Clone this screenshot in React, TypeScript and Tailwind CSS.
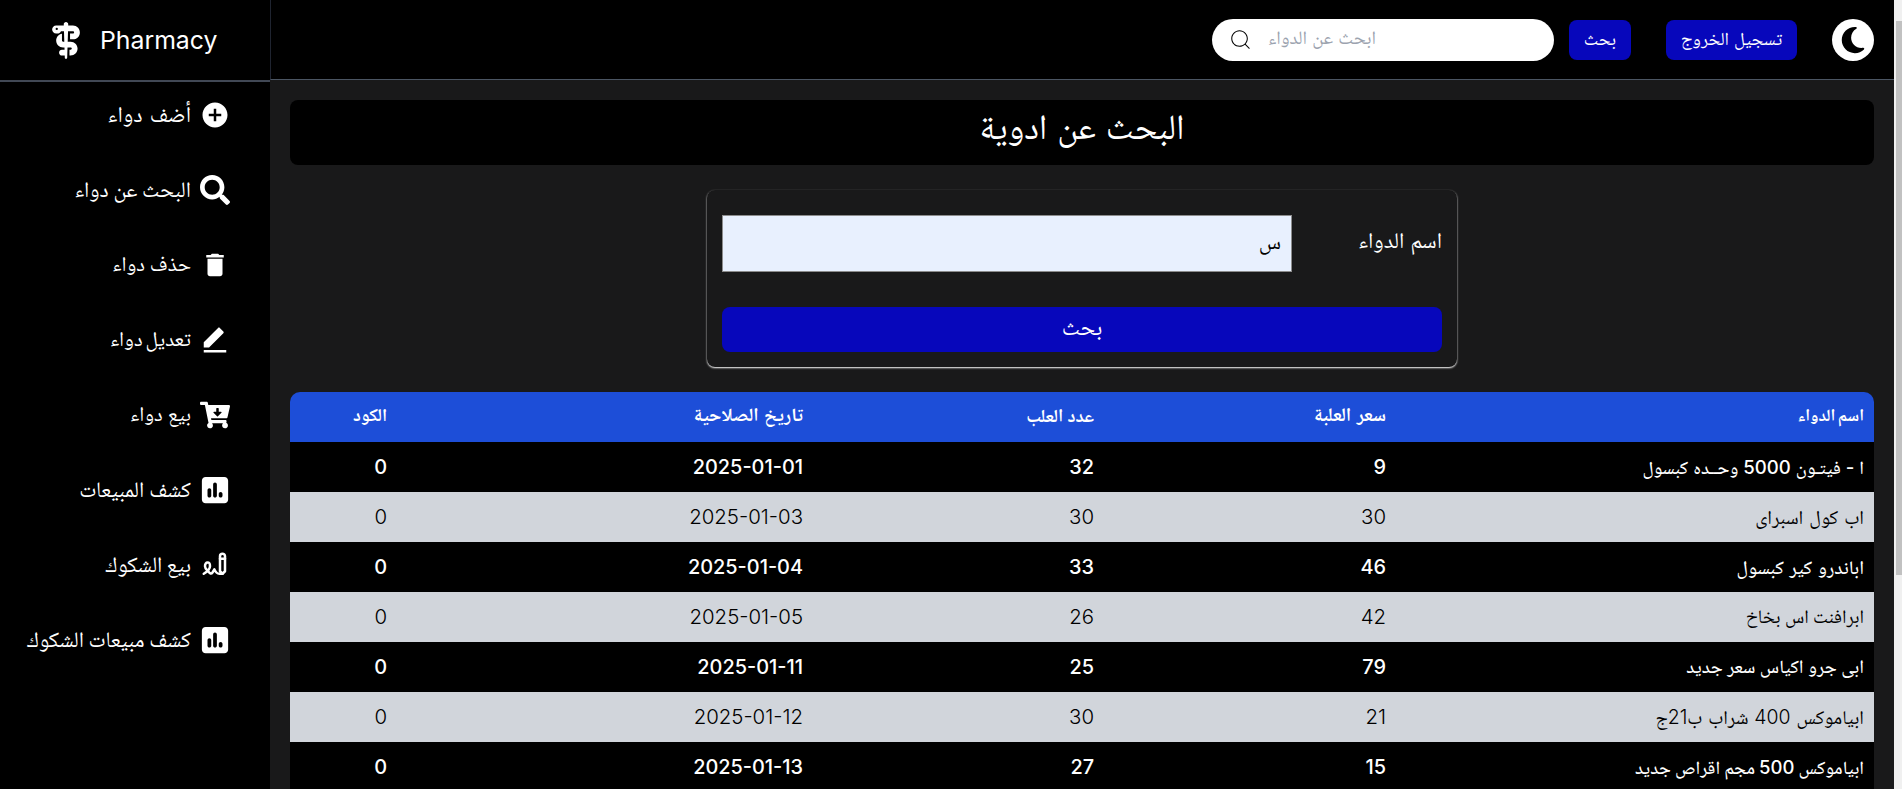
import type { ReactNode } from "react";
import { FaMoon, FaSquarePollVertical, FaStaffSnake } from "react-icons/fa6";
import { FaCartArrowDown, FaSearch } from "react-icons/fa";
import { MdAddCircle, MdDelete } from "react-icons/md";
import { RiEditFill } from "react-icons/ri";
import { TbWritingSign } from "react-icons/tb";
import { CiSearch } from "react-icons/ci";

type NavItem = { label: string; icon: ReactNode; type: string };

const navItems: NavItem[] = [
  { label: "أضف دواء", icon: <MdAddCircle />, type: "text-[22.4px] [word-spacing:1px]" },
  { label: "البحث عن دواء", icon: <FaSearch />, type: "text-[22px] [word-spacing:-1.5px]" },
  { label: "حذف دواء", icon: <MdDelete />, type: "text-[21px] [word-spacing:-1px]" },
  { label: "تعديل دواء", icon: <RiEditFill />, type: "text-[21px] [word-spacing:-3px]" },
  { label: "بيع دواء", icon: <FaCartArrowDown />, type: "text-[21px] [word-spacing:-1px]" },
  { label: "كشف المبيعات", icon: <FaSquarePollVertical />, type: "text-[22px] [word-spacing:-1px]" },
  { label: "بيع الشكوك", icon: <TbWritingSign />, type: "text-[22px] [word-spacing:-2px]" },
  { label: "كشف مبيعات الشكوك", icon: <FaSquarePollVertical />, type: "text-[22px] [word-spacing:-1.5px]" },
];

const columns = [
  { label: "اسم الدواء", type: "text-[17px] [word-spacing:-1.5px]" },
  { label: "سعر العلبة", type: "text-[19px] [word-spacing:1px]" },
  { label: "عدد العلب", type: "text-[18.4px] [word-spacing:0px]" },
  { label: "تاريخ الصلاحية", type: "text-[18.8px] [word-spacing:1px]" },
  { label: "الكود", type: "text-[18px] [word-spacing:0px]" },
];

const medicines = [
  { name: "ا - فيتـون 5000 وحــده كبسول", price: 9, boxes: 32, expiry: "2025-01-01", code: 0, type: "text-[18.6px] [word-spacing:0px]" },
  { name: "اب كول اسبراى", price: 30, boxes: 30, expiry: "2025-01-03", code: 0, type: "text-[19.6px] [word-spacing:0.5px]" },
  { name: "اباندرو كير كبسول", price: 46, boxes: 33, expiry: "2025-01-04", code: 0, type: "text-[19.2px] [word-spacing:0.5px]" },
  { name: "ابرافنت اس بخاخ", price: 42, boxes: 26, expiry: "2025-01-05", code: 0, type: "text-[19px] [word-spacing:-1px]" },
  { name: "ابى جرو اكياس سعر جديد", price: 79, boxes: 25, expiry: "2025-01-11", code: 0, type: "text-[18.8px] [word-spacing:-0.5px]" },
  { name: "ابياموكس 400 شراب ب21ج", price: 21, boxes: 30, expiry: "2025-01-12", code: 0, type: "text-[19.4px] [word-spacing:0.5px]" },
  { name: "ابياموكس 500 مجم اقراص جديد", price: 15, boxes: 27, expiry: "2025-01-13", code: 0, type: "text-[18.5px] [word-spacing:-0.8px]" },
];

const rowGrid = "grid grid-cols-[478px_292px_291px_416px_107px] items-center";

function Sidebar() {
  return (
    <aside dir="ltr" className="flex w-[270px] shrink-0 flex-col bg-black text-white">
      <div className="flex h-[82px] items-center border-b-2 border-[#414855] pl-[52px]">
        <FaStaffSnake className="h-[37px] w-[28px]" />
        <span className="ml-[20px] text-[24.8px] leading-8">Pharmacy</span>
      </div>
      <nav className="-mt-[5px] flex flex-col">
        {navItems.map((item) => (
          <a key={item.label} dir="rtl" className="flex h-[75px] items-center gap-[9px] pr-10">
            <span className="text-[30px]">{item.icon}</span>
            <span className={`-mt-px leading-[30px] whitespace-nowrap ${item.type}`}>{item.label}</span>
          </a>
        ))}
      </nav>
    </aside>
  );
}

function Header() {
  return (
    <header className="flex h-20 shrink-0 items-center border-b border-l border-b-[#4b5563] border-l-[#1f2430] bg-black pr-5 text-white">
      <button className="flex size-[42px] items-center justify-center rounded-full bg-white text-black">
        <FaMoon className="text-[30px]" />
      </button>
      <button className="mr-[35px] flex h-10 w-[131px] items-center justify-center rounded-lg bg-[#0707bb] pb-[3px] text-[18.4px] leading-6">
        تسجيل الخروج
      </button>
      <button className="mr-[35px] flex h-10 w-[62px] items-center justify-center rounded-lg bg-[#0707bb] pb-[3px] text-[18.4px] leading-6">
        بحث
      </button>
      <div dir="ltr" className="mr-[15px] flex h-[42px] w-[342px] items-center rounded-full bg-white pl-[16px]">
        <CiSearch className="text-[25px] text-black" />
        <span className="ml-[15px] pb-[3px] text-[18.9px] leading-6 whitespace-nowrap text-[#9ca3af]">ابحث عن الدواء</span>
      </div>
    </header>
  );
}

function SearchForm() {
  return (
    <form className="mx-auto mt-[25px] h-[177px] w-[750px] rounded-lg bg-[#19191a] px-[15px] pt-[25px] shadow-[0_1px_2px_#fff]">
      <div className="flex h-[57px] items-center justify-between">
        <label className="pb-[7px] text-[22.2px] leading-[30px] text-white">اسم الدواء</label>
        <div className="flex h-[57px] w-[570px] items-center border border-[#8c8c8c] bg-[#e8f0fe] px-[10px] pb-[5px] text-[22px] leading-[30px] text-black">
          س
        </div>
      </div>
      <button
        type="button"
        className="mt-[35px] flex h-[45px] w-full items-center justify-center rounded-lg bg-[#0707bb] pb-[5px] text-[23px] leading-[30px] text-white"
      >
        بحث
      </button>
    </form>
  );
}

function MedicineTable() {
  return (
    <div className="mt-[25px] overflow-hidden rounded-t-[10px]">
      <div className={`${rowGrid} h-[50px] bg-[#1d4ed8] pb-1 leading-6 font-bold text-white`}>
        {columns.map((c) => (
          <span key={c.label} className={`pr-[10px] whitespace-nowrap ${c.type}`}>
            {c.label}
          </span>
        ))}
      </div>
      {medicines.map((m, i) => (
        <div
          key={m.name}
          className={`${rowGrid} h-[50px] leading-7 ${
            i % 2 === 0
              ? "bg-black text-[19.9px] font-medium text-white"
              : "bg-[#d1d5db] text-[20.4px] font-light text-black"
          }`}
        >
          <span className={`pr-[10px] pb-px whitespace-nowrap ${m.type}`}>{m.name}</span>
          <span className="pr-[10px]">{m.price}</span>
          <span className="pr-[10px]">{m.boxes}</span>
          <span dir="ltr" className="pr-[10px] text-right">
            {m.expiry}
          </span>
          <span className="pr-[10px]">{m.code}</span>
        </div>
      ))}
    </div>
  );
}

export default function App() {
  return (
    <div className="h-[796px] w-[1902px] overflow-hidden bg-white font-[Inter,'Noto_Naskh_Arabic','DejaVu_Sans',sans-serif]">
      <div className="flex h-[789px] overflow-hidden">
        <Sidebar />
        <div dir="rtl" className="flex w-[1624px] shrink-0 flex-col bg-[#19191a]">
          <Header />
          <main className="h-[709px] overflow-hidden px-5 pt-5">
            <h1 className="flex h-[65px] items-center justify-center rounded-lg bg-black pb-3 text-[35.4px] leading-10 text-white">
              البحث عن ادوية
            </h1>
            <SearchForm />
            <MedicineTable />
          </main>
        </div>
        <div className="flex w-2 shrink-0 flex-col bg-[#f0f0f0] pt-[21px] pl-[2px]">
          <div className="h-[554px] bg-[#c1c1c1]" />
        </div>
      </div>
    </div>
  );
}
